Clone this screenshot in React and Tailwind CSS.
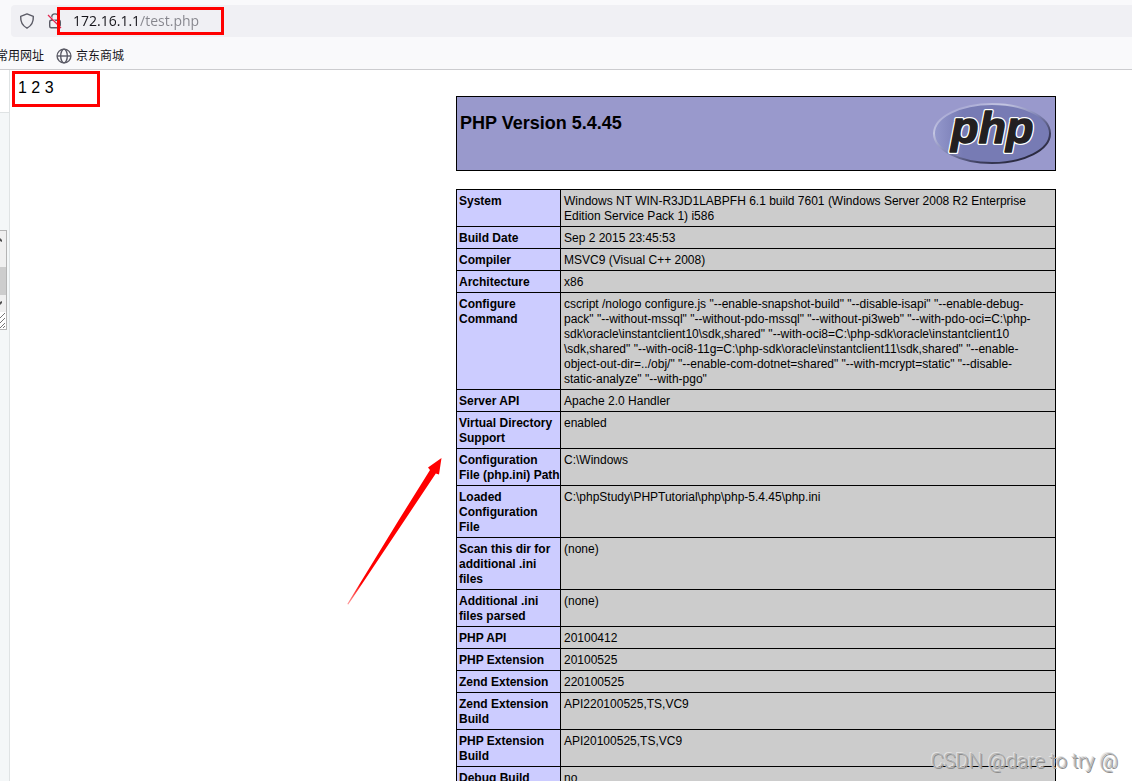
import React, { useState } from "react";

const rows = [
  {
    label: ["System"],
    value: [
      "Windows NT WIN-R3JD1LABPFH 6.1 build 7601 (Windows Server 2008 R2 Enterprise",
      "Edition Service Pack 1) i586",
    ],
  },
  { label: ["Build Date"], value: ["Sep 2 2015 23:45:53"] },
  { label: ["Compiler"], value: ["MSVC9 (Visual C++ 2008)"] },
  { label: ["Architecture"], value: ["x86"] },
  {
    label: ["Configure", "Command"],
    value: [
      'cscript /nologo configure.js "--enable-snapshot-build" "--disable-isapi" "--enable-debug-',
      'pack" "--without-mssql" "--without-pdo-mssql" "--without-pi3web" "--with-pdo-oci=C:\\php-',
      'sdk\\oracle\\instantclient10\\sdk,shared" "--with-oci8=C:\\php-sdk\\oracle\\instantclient10',
      '\\sdk,shared" "--with-oci8-11g=C:\\php-sdk\\oracle\\instantclient11\\sdk,shared" "--enable-',
      'object-out-dir=../obj/" "--enable-com-dotnet=shared" "--with-mcrypt=static" "--disable-',
      'static-analyze" "--with-pgo"',
    ],
  },
  { label: ["Server API"], value: ["Apache 2.0 Handler"] },
  { label: ["Virtual Directory", "Support"], value: ["enabled"] },
  { label: ["Configuration", "File (php.ini) Path"], value: ["C:\\Windows"] },
  {
    label: ["Loaded", "Configuration", "File"],
    value: ["C:\\phpStudy\\PHPTutorial\\php\\php-5.4.45\\php.ini"],
  },
  { label: ["Scan this dir for", "additional .ini", "files"], value: ["(none)"] },
  { label: ["Additional .ini", "files parsed"], value: ["(none)"] },
  { label: ["PHP API"], value: ["20100412"] },
  { label: ["PHP Extension"], value: ["20100525"] },
  { label: ["Zend Extension"], value: ["220100525"] },
  { label: ["Zend Extension", "Build"], value: ["API220100525,TS,VC9"] },
  { label: ["PHP Extension", "Build"], value: ["API20100525,TS,VC9"] },
  { label: ["Debug Build"], value: ["no"] },
];

function Lines({ lines }) {
  return lines.map((line) => (
    <span key={line} className="block whitespace-nowrap">
      {line}
    </span>
  ));
}

function ShieldIcon() {
  return (
    <svg className="size-4 shrink-0" viewBox="0 0 16 16" fill="none" stroke="#5b5b66" strokeWidth="1.4" strokeLinejoin="round">
      <path d="M8 .9 14.3 3.4c.3 4.9-1.4 9.2-6.3 11.8C3.1 12.6 1.4 8.3 1.7 3.4Z" />
    </svg>
  );
}

function InsecureLockIcon() {
  return (
    <svg className="size-4 shrink-0" viewBox="0 0 16 16" fill="none">
      <path d="M4.7 7V4.2a3.3 3.3 0 0 1 6.6 0V7" stroke="#5b5b66" strokeWidth="1.4" />
      <rect x="2.7" y="7.3" width="10.6" height="7.5" rx="1.5" stroke="#5b5b66" strokeWidth="1.4" />
      <path d="M2 2.5 15 15.5" stroke="#f0f0f4" strokeWidth="1.5" />
      <path d="M1 2 14 15" stroke="#e22850" strokeWidth="1.3" />
    </svg>
  );
}

function GlobeIcon() {
  return (
    <svg className="size-4 shrink-0" viewBox="0 0 16 16" fill="none" stroke="#5b5b66" strokeWidth="1.4">
      <circle cx="8" cy="8" r="6.9" />
      <ellipse cx="8" cy="8" rx="3.3" ry="6.9" />
      <path d="M1.2 8h13.6" />
    </svg>
  );
}

function PhpLogo() {
  return (
    <svg className="h-[67px] w-[120px] shrink-0" viewBox="0 0 120 67" role="img" aria-label="PHP logo">
      <defs>
        <linearGradient id="rim" x1="0.1" y1="0" x2="0.9" y2="1">
          <stop offset="0" stopColor="#9999cc" />
          <stop offset="0.25" stopColor="#c4c6e2" />
          <stop offset="0.5" stopColor="#8185b5" />
          <stop offset="0.75" stopColor="#3c3d5c" />
          <stop offset="1" stopColor="#1d1b2b" />
        </linearGradient>
        <linearGradient id="face" x1="0" y1="0" x2="1" y2="0">
          <stop offset="0" stopColor="#9498cc" />
          <stop offset="0.25" stopColor="#777bb4" />
          <stop offset="1" stopColor="#777bb4" />
        </linearGradient>
        <text
          id="wordmark"
          x="19"
          y="43"
          fontFamily="Liberation Sans, sans-serif"
          fontSize="45"
          fontWeight="bold"
          fontStyle="italic"
          strokeLinejoin="round"
        >
          php
        </text>
      </defs>
      <ellipse cx="60" cy="33.5" rx="58" ry="29.5" fill="url(#face)" stroke="url(#rim)" strokeWidth="2" />
      <use href="#wordmark" fill="#ffffff" stroke="#ffffff" strokeWidth="4" />
      <use href="#wordmark" fill="#231f20" stroke="#231f20" strokeWidth="1.4" />
    </svg>
  );
}

function BrowserBar() {
  const [url, setUrl] = useState("172.16.1.1/test.php");

  return (
    <header className="shrink-0 border-b border-[#cccccf] bg-[#f9f9fb] pt-[5px]">
      <div className="relative ml-[11px] flex h-8 items-center rounded-l bg-[#f0f0f4] pl-2">
        <ShieldIcon />
        <span className="ml-3">
          <InsecureLockIcon />
        </span>
        <input
          type="text"
          aria-label="Address"
          value={url}
          onChange={(e) => setUrl(e.target.value)}
          className="ml-[10px] min-w-0 flex-1 bg-[linear-gradient(to_right,#15141a_66px,#85858c_66px)] bg-clip-text font-['Open_Sans',sans-serif] text-sm text-transparent caret-black outline-none"
        />
        <div className="pointer-events-none absolute top-0.5 left-[46px] h-7 w-[167px] border-3 border-[#ff0000]" />
      </div>
      <nav className="flex h-8 items-center overflow-hidden pt-1.5 font-['Liberation_Sans','Noto_Sans_CJK_SC',sans-serif] text-xs text-[#15141a]">
        <a href="#sites" className="-ml-1 whitespace-nowrap">
          常用网址
        </a>
        <a href="#jd" className="ml-3 flex items-center gap-1 whitespace-nowrap">
          <GlobeIcon />
          京东商城
        </a>
      </nav>
    </header>
  );
}

function SideStrip() {
  return (
    <aside className="flex w-[10px] shrink-0 flex-col border-r border-[#dfe3e4] bg-[#f4f7f8]">
      <div className="h-[43px] border-b border-[#dfe3e4] bg-white" />
      {/* scrollbar edge of the neighbouring panel */}
      <div className="mt-[117px] flex h-[100px] w-[7px] flex-col border-y border-r border-[#b4b4b4] bg-[#f0f0f0]">
        <svg className="h-9 w-full" viewBox="0 0 6 36">
          <path d="M0 7 2 9V11L0 10Z" fill="#505050" />
        </svg>
        <div className="h-7 bg-[#cdcdcd]" />
        <svg className="h-[34px] w-full" viewBox="0 0 6 34">
          <path d="M0 10 2 8V6L0 7Z" fill="#505050" />
          <rect y="17" width="6" height="17" fill="#ffffff" />
          <path d="M0 23 5 18M0 28 5 23M0 33 5 28M3 33 5 31" stroke="#777777" />
        </svg>
      </div>
    </aside>
  );
}

export default function App() {
  return (
    <div className="relative flex h-screen flex-col overflow-hidden bg-white font-['Liberation_Sans',Arial,sans-serif] text-black">
      <BrowserBar />

      <div className="flex min-h-0 flex-1">
        <SideStrip />

        <main className="relative min-w-0 flex-1 overflow-hidden">
          <div className="flex items-start">
            <p className="mt-px ml-0.5 h-9 w-[88px] shrink-0 border-3 border-[#ff0000] pt-0.5 pl-[3px] text-base">
              1 2 3
            </p>

            <div className="mt-[26px] mr-[76px] ml-auto w-[600px]">
              <div className="flex items-start justify-between border border-black bg-[#9999cc] p-[3px]">
                <h1 className="mt-3 text-lg leading-[22px] font-bold">PHP Version 5.4.45</h1>
                <PhpLogo />
              </div>

              <table className="mt-[18px] w-full table-fixed border-collapse text-xs leading-[15px]">
                <colgroup>
                  <col className="w-[104px]" />
                  <col />
                </colgroup>
                <tbody>
                  {rows.map((row) => (
                    <tr key={row.label.join(" ")}>
                      <th scope="row" className="border border-black bg-[#ccccff] px-0.5 pt-1 pb-0.5 text-left align-top font-bold">
                        <Lines lines={row.label} />
                      </th>
                      <td className="border border-black bg-[#cccccc] px-[3px] pt-1 pb-0.5 align-top">
                        <Lines lines={row.value} />
                      </td>
                    </tr>
                  ))}
                </tbody>
              </table>
            </div>
          </div>

          {/* red arrow pointing at the table */}
          <svg
            className="pointer-events-none absolute top-[388px] right-[690px] h-[148px] w-[95px]"
            viewBox="0 0 95 148"
          >
            <defs>
              <linearGradient id="tail" gradientUnits="userSpaceOnUse" x1="1" y1="146" x2="14" y2="125">
                <stop offset="0" stopColor="#ff0000" stopOpacity="0.4" />
                <stop offset="1" stopColor="#ff0000" />
              </linearGradient>
            </defs>
            <path d="M94.5 0 92 16.500 88.800 15.500 57.800 62 1.300 146.500 .3 146 51.800 62 83 12 81 9.500Z" fill="url(#tail)" />
          </svg>
        </main>
      </div>

      <div className="pointer-events-none absolute right-[14px] bottom-[9px] font-['Roboto',sans-serif] text-[20px] leading-[22px] font-light text-[#b4b4b4] [text-shadow:1px_1px_0_#8c8c8c,-1px_-1px_0_#e4e4e4]">
        CSDN @dare to try @
      </div>
    </div>
  );
}
